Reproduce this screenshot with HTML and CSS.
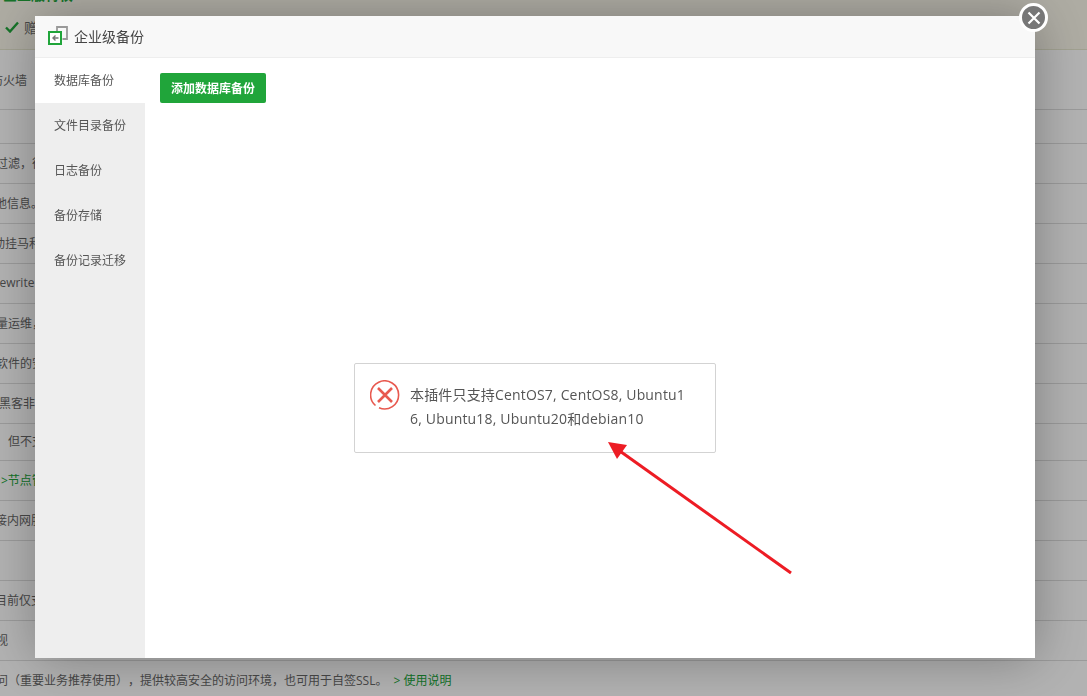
FILE: index.html
```html
<!DOCTYPE html>
<html lang="zh-CN">
<head>
<meta charset="utf-8">
<title>企业级备份</title>
<link rel="stylesheet" href="styles.css">
</head>
<body>
<main class="page">
  <header class="banner">
    <div class="banner-title">企业版特权</div>
    <div class="banner-item">
      <svg class="check" viewBox="0 0 14 12" width="14" height="12"><path d="M1 6.5 L5 10.5 L13 1.5" fill="none" stroke="#20a53a" stroke-width="2.4"/></svg>
      <span>赠送</span>
    </div>
  </header>
  <div class="row row-tall"><span class="t i9">防火墙</span></div>
  <div class="row row-head"></div>
  <div class="row"><span class="t i4">过滤，往返</span></div>
  <div class="row"><span class="t i5">地信息。</span></div>
  <div class="row"><span class="t i7">动挂马和</span></div>
  <div class="row"><span class="t i8">Rewrite</span></div>
  <div class="row"><span class="t i4">量运维，</span></div>
  <div class="row"><span class="t i4">软件的安全</span></div>
  <div class="row"><span class="t i1">黑客非法</span></div>
  <div class="row row-short"><span class="t p8">但不支持</span></div>
  <div class="row"><span class="t green p1">&gt;节点管理</span></div>
  <div class="row"><span class="t i5">接内网服务</span></div>
  <div class="row"></div>
  <div class="row"><span class="t i5">目前仅支持</span></div>
  <div class="row"><span class="t i4">视</span></div>
  <div class="row"><span class="t i4">问（重要业务推荐使用），提供较高安全的访问环境，也可用于自签SSL。<span class="green link">&gt; 使用说明</span></span></div>
</main>

<div class="shade"></div>

<section class="dialog">
  <header class="dialog-head">
    <svg class="head-icon" viewBox="0 0 20 20" width="20" height="20">
      <path d="M9 5.5 V1 H19 V13 H14.5" fill="none" stroke="#999" stroke-width="1.8"/>
      <rect x="1" y="6" width="12" height="12" fill="#fff" stroke="#20a53a" stroke-width="2"/>
      <path d="M10.5 12 H5 M7.5 9.5 L5 12 L7.5 14.5" fill="none" stroke="#777" stroke-width="1.4"/>
    </svg>
    <span>企业级备份</span>
  </header>
  <div class="dialog-body">
    <nav class="side">
      <a class="side-item active">数据库备份</a>
      <a class="side-item">文件目录备份</a>
      <a class="side-item">日志备份</a>
      <a class="side-item">备份存储</a>
      <a class="side-item">备份记录迁移</a>
    </nav>
    <div class="content">
      <button class="btn">添加数据库备份</button>
    </div>
  </div>
</section>

<button class="close" aria-label="关闭">
  <svg viewBox="0 0 14 14" width="14" height="14"><path d="M1.5 1.5 L12.5 12.5 M12.5 1.5 L1.5 12.5" stroke="#fff" stroke-width="2.2"/></svg>
</button>

<div class="toast">
  <svg class="toast-icon" viewBox="0 0 30 30" width="30" height="30">
    <path d="M5.5 25.5 A14 14 0 1 1 9 27.7" fill="none" stroke="#e8594f" stroke-width="1.6"/>
    <path d="M8 8 L22 22 M22 8 L8 22" stroke="#e8594f" stroke-width="2.6"/>
  </svg>
  <p class="toast-text">本插件只支持CentOS7, CentOS8, Ubuntu16, Ubuntu18, Ubuntu20和debian10</p>
</div>

<svg class="arrow" viewBox="0 0 1087 696" width="1087" height="696">
  <path d="M791 573 L617 449" fill="none" stroke="#ed1c24" stroke-width="3"/>
  <path d="M608 442 L627 445 L617 459 Z" fill="#ed1c24"/>
</svg>
</body>
</html>
```
FILE: styles.css
```css
* { box-sizing: border-box; }
html, body { margin: 0; height: 100%; overflow: hidden; }
body {
  width: 1087px;
  height: 696px;
  background: #fff;
  font-family: "Open Sans", "Noto Sans CJK SC", sans-serif;
  font-size: 12px;
  color: #666;
  text-spacing-trim: space-all;
}
.page { display: flex; flex-direction: column; height: 696px; overflow: hidden; }
.banner {
  height: 50px;
  flex: none;
  background: #f9f6ea;
  border-bottom: 1px solid #e6e6cf;
  overflow: hidden;
  position: relative;
  padding-left: 3px;
}
.banner-title {
  margin-top: -15px;
  height: 20px;
  line-height: 20px;
  font-size: 14px;
  font-weight: 700;
  color: #20a53a;
}
.banner-item {
  display: flex;
  align-items: center;
  gap: 5px;
  margin-top: 12px;
  padding-left: 2px;
  font-size: 14px;
  height: 20px;
}
.row {
  flex: none;
  height: 40px;
  padding-bottom: 2px;
  border-bottom: 1px solid #ddd;
  display: flex;
  align-items: center;
  white-space: nowrap;
}
.row-tall { height: 60px; padding-bottom: 0; }
.row-head { height: 34px; }
.row-short { height: 37px; }
.t { display: block; }
.i1 { margin-left: -1px; }
.i4 { margin-left: -4px; }
.i5 { margin-left: -5px; }
.i7 { margin-left: -7px; }
.i8 { margin-left: -8px; }
.i9 { margin-left: -9px; }
.p1 { margin-left: 1px; }
.p8 { margin-left: 8px; }
.green { color: #20a53a; }
.link { margin-left: 6px; }

.shade { position: fixed; inset: 0; background: rgba(0, 0, 0, .3); }

.dialog {
  position: fixed;
  left: 35px;
  top: 16px;
  width: 1000px;
  height: 642px;
  background: #fff;
  box-shadow: 1px 1px 50px rgba(0, 0, 0, .3);
  display: flex;
  flex-direction: column;
}
.dialog-head {
  height: 42px;
  flex: none;
  background: #f8f8f8;
  border-bottom: 1px solid #eee;
  display: flex;
  align-items: center;
  gap: 6px;
  padding: 0 0 2px 13px;
  font-size: 14px;
  color: #444;
}
.head-icon { flex: none; }
.dialog-body { flex: 1; display: flex; min-height: 0; }
.side { width: 110px; flex: none; background: #eee; display: flex; flex-direction: column; }
.side-item {
  height: 45px;
  line-height: 45px;
  padding-left: 19px;
  color: #555;
  font-size: 12px;
}
.side-item.active { background: #fff; }
.content { flex: 1; padding: 15px; }
.btn {
  display: block;
  width: 106px;
  height: 30px;
  padding: 0;
  border: 0;
  border-radius: 2px;
  background: #20a53a;
  color: #fff;
  font: 700 12px "Open Sans", "Noto Sans CJK SC", sans-serif;
}

.close {
  position: fixed;
  left: 1019px;
  top: 3px;
  width: 29px;
  height: 29px;
  padding: 0;
  border: 3px solid #fff;
  border-radius: 50%;
  background: #777;
  display: flex;
  align-items: center;
  justify-content: center;
}

.toast {
  position: fixed;
  left: 354px;
  top: 363px;
  width: 362px;
  height: 90px;
  background: #fff;
  border: 1px solid #d3d3d3;
  border-radius: 2px;
  display: flex;
  gap: 10px;
  padding: 16px 15px;
}
.toast-icon { flex: none; }
.toast-text {
  margin: 0;
  width: 280px;
  font-size: 14px;
  line-height: 24px;
  letter-spacing: .17px;
  color: #555;
  word-break: break-all;
  padding-top: 3px;
}
.arrow { position: fixed; left: 0; top: 0; pointer-events: none; }
```
